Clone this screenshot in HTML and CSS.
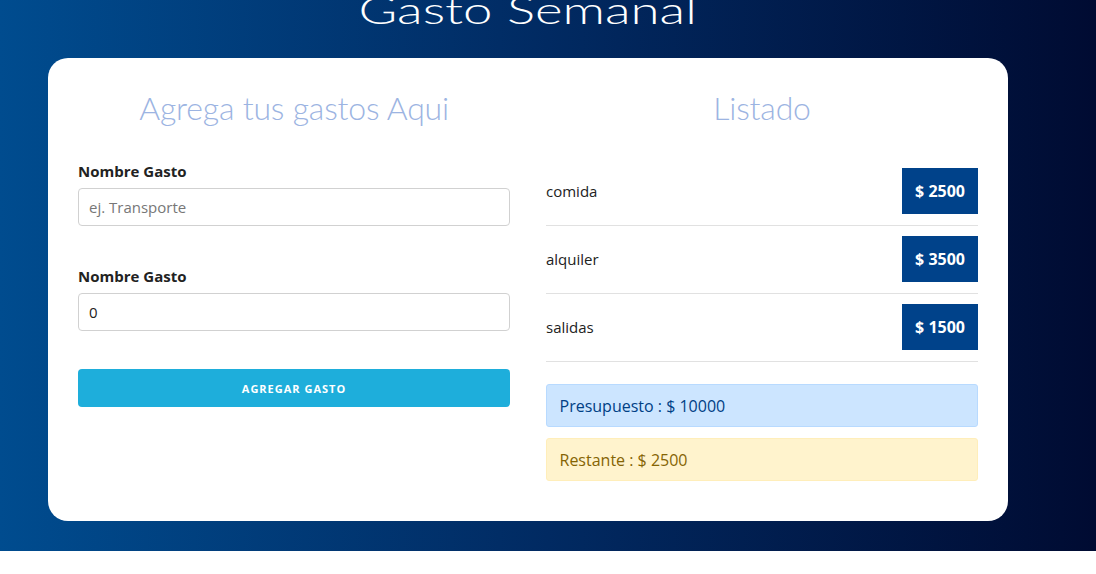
FILE: index.html
```html
<!DOCTYPE html>
<html lang="es">
<head>
<meta charset="utf-8">
<title>Gasto Semanal</title>
<link rel="stylesheet" href="styles.css">
</head>
<body>
<div class="page">
  <div class="container">
    <header class="hero">
      <h1 class="hero-title">Gasto Semanal</h1>
    </header>
    <main class="card">
      <section class="col">
        <h2 class="col-title">Agrega tus gastos Aqui</h2>
        <form class="form">
          <div class="field">
            <label class="label">Nombre Gasto</label>
            <input class="input" type="text" placeholder="ej. Transporte">
          </div>
          <div class="field">
            <label class="label">Nombre Gasto</label>
            <input class="input" type="text" value="0">
          </div>
          <button class="button" type="button">Agregar gasto</button>
        </form>
      </section>
      <section class="col">
        <h2 class="col-title">Listado</h2>
        <ul class="list">
          <li class="item"><span class="item-name">comida</span><span class="badge">$ 2500</span></li>
          <li class="item"><span class="item-name">alquiler</span><span class="badge">$ 3500</span></li>
          <li class="item"><span class="item-name">salidas</span><span class="badge">$ 1500</span></li>
        </ul>
        <div class="alert alert-primary">Presupuesto : $ 10000</div>
        <div class="alert alert-warning">Restante : $ 2500</div>
      </section>
    </main>
  </div>
</div>
</body>
</html>
```

FILE: styles.css
```css
* { box-sizing: border-box; }
html, body { margin: 0; padding: 0; background: #fff; }
body {
  font-family: "Open Sans", "Noto Sans", sans-serif;
  font-size: 15px;
  line-height: 1.6;
  color: #222;
}
.page {
  background: linear-gradient(to right, #004c8f 0%, #012a62 50%, #000b32 100%);
  padding-bottom: 30px;
}
.container {
  width: 960px;
  margin-left: 48px;
}
.hero {
  height: 58px;
  overflow: hidden;
  display: flex;
  justify-content: center;
}
.hero-title {
  margin: -13px 0 0 0;
  font-family: Lato, sans-serif;
  font-weight: 300;
  font-size: 38px;
  line-height: 45px;
  color: #fff;
  transform: scaleX(1.39);
  white-space: nowrap;
}
.card {
  background: #fff;
  border-radius: 20px;
  padding: 27px 30px 30px;
  display: grid;
  grid-template-columns: 432px 432px;
  column-gap: 36px;
}
.col-title {
  margin: 0;
  text-align: center;
  font-family: Lato, sans-serif;
  font-weight: 300;
  font-size: 32px;
  line-height: 45px;
  letter-spacing: -0.2px;
  color: #9cb4e2;
}
.form { margin-top: 29px; }
.field { margin-bottom: 38px; }
.label {
  display: block;
  font-weight: 700;
  font-size: 15px;
  line-height: 24px;
  margin-bottom: 5px;
  color: #222;
}
.input {
  display: block;
  width: 100%;
  height: 38px;
  padding: 6px 10px;
  border: 1px solid #d1d1d1;
  border-radius: 4px;
  font-family: "Open Sans", sans-serif;
  font-size: 15px;
  color: #222;
  background: #fff;
}
.input::placeholder { color: #777; }
.button {
  display: block;
  width: 100%;
  height: 38px;
  margin-top: 36px;
  border: 0;
  border-radius: 4px;
  background: #1eaedb;
  color: #fff;
  font-family: "Open Sans", sans-serif;
  font-size: 11px;
  font-weight: 700;
  letter-spacing: 1px;
  text-transform: uppercase;
}
.list {
  list-style: none;
  margin: 28px 0 0 0;
  padding: 0;
}
.item {
  display: flex;
  align-items: center;
  justify-content: space-between;
  padding: 10px 0 11px;
  border-bottom: 1px solid #e1e1e1;
  font-size: 15px;
}
.badge {
  background: #00428a;
  color: #fff;
  font-weight: 700;
  font-size: 16px;
  line-height: 26px;
  padding: 10px 13px;
}
.alert {
  padding: 7.5px 12.5px;
  border: 1px solid transparent;
  border-radius: 3px;
  font-size: 16px;
  line-height: 26px;
  margin-bottom: 11px;
}
.list + .alert { margin-top: 22px; }
.alert-primary { background: #cce5ff; border-color: #b8daff; color: #004085; }
.alert-warning { background: #fff3cd; border-color: #ffeeba; color: #856404; margin-bottom: 10px; }
```
